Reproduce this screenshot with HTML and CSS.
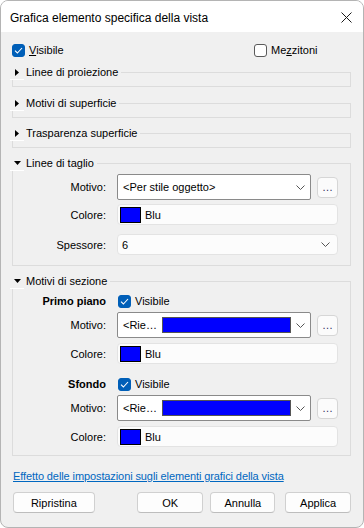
FILE: index.html
```html
<!DOCTYPE html>
<html>
<head>
<meta charset="utf-8">
<link rel="stylesheet" href="styles.css">
</head>
<body>
<div class="win">
  <div class="titlebar">
    <span class="title">Grafica elemento specifica della vista</span>
    <svg class="close" width="11" height="11" viewBox="0 0 11 11"><path d="M0.5 0.5 L10.5 10.5 M10.5 0.5 L0.5 10.5" stroke="#1a1a1a" stroke-width="1" fill="none"/></svg>
  </div>
  <div class="body">
    <div class="toprow">
      <div class="chk first"><span class="box on"><svg width="9" height="7" viewBox="0 0 9 7"><path d="M1 3.6 L3.4 6 L8 1" stroke="#fff" stroke-width="1.1" fill="none"/></svg></span><span><u>V</u>isibile</span></div>
      <div class="chk"><span class="box"></span><span>Me<u>z</u>zitoni</span></div>
    </div>

    <div class="group collapsed g1">
      <div class="ghead"><span class="tog"><svg width="4" height="7" viewBox="0 0 4 7"><path d="M0 0 L4 3.5 L0 7 Z" fill="#000"/></svg></span><span>Linee di proiezione</span></div>
    </div>
    <div class="group collapsed g2">
      <div class="ghead"><span class="tog"><svg width="4" height="7" viewBox="0 0 4 7"><path d="M0 0 L4 3.5 L0 7 Z" fill="#000"/></svg></span><span>Motivi di superficie</span></div>
    </div>
    <div class="group collapsed">
      <div class="ghead"><span class="tog"><svg width="4" height="7" viewBox="0 0 4 7"><path d="M0 0 L4 3.5 L0 7 Z" fill="#000"/></svg></span><span>Trasparenza superficie</span></div>
    </div>

    <div class="group taglio">
      <div class="ghead"><span class="tog"><svg width="7" height="4" viewBox="0 0 7 4"><path d="M0 0 L7 0 L3.5 4 Z" fill="#000"/></svg></span><span>Linee di taglio</span></div>
      <div class="row r-motivo">
        <span class="lbl">Motivo:</span>
        <div class="combo focus"><span class="ctext">&lt;Per stile oggetto&gt;</span><svg class="chev" width="9" height="5" viewBox="0 0 9 5"><path d="M0.5 0.5 L4.5 4.5 L8.5 0.5" stroke="#555" fill="none"/></svg></div>
        <div class="dots">…</div>
      </div>
      <div class="row r-colore">
        <span class="lbl">Colore:</span>
        <div class="field"><span class="swatch"></span><span>Blu</span></div>
      </div>
      <div class="row r-spess">
        <span class="lbl">Spessore:</span>
        <div class="field combo2"><span class="ctext">6</span><svg class="chev" width="9" height="5" viewBox="0 0 9 5"><path d="M0.5 0.5 L4.5 4.5 L8.5 0.5" stroke="#555" fill="none"/></svg></div>
      </div>
    </div>

    <div class="group sezione">
      <div class="ghead"><span class="tog"><svg width="7" height="4" viewBox="0 0 7 4"><path d="M0 0 L7 0 L3.5 4 Z" fill="#000"/></svg></span><span>Motivi di sezione</span></div>
      <div class="row r-sub">
        <span class="lbl bold">Primo piano</span>
        <div class="chk"><span class="box on"><svg width="9" height="7" viewBox="0 0 9 7"><path d="M1 3.6 L3.4 6 L8 1" stroke="#fff" stroke-width="1.1" fill="none"/></svg></span><span>Visibile</span></div>
      </div>
      <div class="row r-motivo2">
        <span class="lbl">Motivo:</span>
        <div class="combo"><span class="ctext">&lt;Rie…</span><span class="bar"></span><svg class="chev" width="9" height="5" viewBox="0 0 9 5"><path d="M0.5 0.5 L4.5 4.5 L8.5 0.5" stroke="#555" fill="none"/></svg></div>
        <div class="dots">…</div>
      </div>
      <div class="row r-colore">
        <span class="lbl">Colore:</span>
        <div class="field"><span class="swatch"></span><span>Blu</span></div>
      </div>
      <div class="row r-sub r-sfondo">
        <span class="lbl bold">Sfondo</span>
        <div class="chk"><span class="box on"><svg width="9" height="7" viewBox="0 0 9 7"><path d="M1 3.6 L3.4 6 L8 1" stroke="#fff" stroke-width="1.1" fill="none"/></svg></span><span>Visibile</span></div>
      </div>
      <div class="row r-motivo2">
        <span class="lbl">Motivo:</span>
        <div class="combo"><span class="ctext">&lt;Rie…</span><span class="bar"></span><svg class="chev" width="9" height="5" viewBox="0 0 9 5"><path d="M0.5 0.5 L4.5 4.5 L8.5 0.5" stroke="#555" fill="none"/></svg></div>
        <div class="dots">…</div>
      </div>
      <div class="row r-colore">
        <span class="lbl">Colore:</span>
        <div class="field"><span class="swatch"></span><span>Blu</span></div>
      </div>
    </div>

    <a class="link">Effetto delle impostazioni sugli elementi grafici della vista</a>

    <div class="buttons">
      <div class="btn b-rip">Ripristina</div>
      <div class="btn b-ok">OK</div>
      <div class="btn b-ann">Annulla</div>
      <div class="btn b-app">Applica</div>
    </div>
  </div>
</div>
</body>
</html>
```
FILE: styles.css
```css
html, body {
  margin: 0;
  padding: 0;
  background: #ffffff;
}
body {
  font-family: "Liberation Sans", Arial, sans-serif;
  font-size: 11px;
  color: #000;
}
.win {
  width: 364px;
  height: 528px;
  box-sizing: border-box;
  border: 1px solid #b4b4b4;
  border-radius: 8px;
  background: #f0f0f0;
  overflow: hidden;
  display: flex;
  flex-direction: column;
}
.titlebar {
  height: 31px;
  flex: none;
  background: #fff;
  display: flex;
  align-items: center;
  padding: 0 11px 0 9px;
}
.title {
  flex: 1;
  font-size: 12px;
  line-height: 16px;
  margin-top: 2px;
}
.close {
  display: block;
  margin-top: 2px;
}
.body {
  display: flex;
  flex-direction: column;
  padding: 0 12px 0 11px;
}
.toprow {
  display: flex;
  height: 16px;
  margin-top: 10px;
}
.chk {
  display: flex;
  align-items: center;
  gap: 4px;
  line-height: 16px;
}
.chk.first {
  width: 242px;
  flex: none;
}
.box {
  width: 11px;
  height: 11px;
  border: 1px solid #5a5a5a;
  border-radius: 3px;
  background: #fff;
  display: flex;
  align-items: center;
  justify-content: center;
}
.box.on {
  background: #005fb8;
  border-color: #005fb8;
}
.group {
  border: 1px solid #dcdcdc;
  margin-top: 15px;
  display: flex;
  flex-direction: column;
}
.group.g1 { margin-top: 14px; }
.group.g2 { margin-top: 16px; }
.group.collapsed {
  height: 15px;
  box-sizing: border-box;
}
.ghead {
  align-self: flex-start;
  display: flex;
  align-items: center;
  height: 16px;
  margin: -9px 0 0 -3px;
  padding-right: 3px;
  background: #f0f0f0;
  line-height: 16px;
}
.tog {
  width: 14px;
  height: 14px;
  box-sizing: border-box;
  border-bottom: 1px solid #fff;
  display: flex;
  align-items: center;
  justify-content: center;
  margin-right: 2px;
  margin-top: 1px;
}
.row {
  display: flex;
  align-items: center;
  padding-right: 12px;
}
.lbl {
  width: 93px;
  text-align: right;
  margin-right: 11px;
  flex: none;
}
.bold {
  font-weight: bold;
}
.taglio .r-motivo { margin-top: 3px; }
.taglio .r-colore { margin-top: 4px; }
.taglio .r-spess { margin-top: 9px; }
.taglio { padding-bottom: 10px; }
.sezione { padding-bottom: 8px; }
.sezione .r-sub { margin-top: 4px; height: 16px; }
.sezione .r-sfondo { margin-top: 12px; }
.sezione .r-motivo2 { margin-top: 3px; }
.sezione .r-colore { margin-top: 5px; }
.r-sub .chk { margin-left: 1px; }

.combo {
  width: 194px;
  height: 26px;
  box-sizing: border-box;
  border: 1px solid #8a8a8a;
  background: #fff;
  display: flex;
  align-items: center;
  padding: 0 5px 0 5px;
  border-radius: 2px;
}
.ctext {
  flex: none;
  line-height: 16px;
}
.combo .chev, .combo2 .chev {
  margin-left: auto;
}
.bar {
  width: 127px;
  height: 14px;
  background: #0000ff;
  border: 1px solid #555;
  margin-left: 5px;
}
.dots {
  width: 21px;
  height: 21px;
  box-sizing: border-box;
  margin-left: 6px;
  border: 1px solid #d6d6d6;
  border-radius: 4px;
  background: #fbfbfb;
  display: flex;
  align-items: center;
  justify-content: center;
  line-height: 14px;
  color: #303060;
  font-size: 11px;
}
.field {
  flex: 1;
  height: 21px;
  box-sizing: border-box;
  border: 1px solid #e3e3e3;
  border-radius: 4px;
  background: #fcfcfc;
  display: flex;
  align-items: center;
  padding: 0 7px 0 2px;
  line-height: 16px;
}
.combo2 {
  padding-left: 4px;
}
.swatch {
  width: 21px;
  height: 16px;
  box-sizing: border-box;
  background: #0000ff;
  border: 1px solid #000;
  margin-right: 4px;
}
.link {
  margin-top: 12px;
  margin-left: 1px;
  color: #0067c0;
  text-decoration: underline;
  line-height: 16px;
  letter-spacing: -0.1px;
  align-self: flex-start;
}
.buttons {
  display: flex;
  margin-top: 8px;
}
.btn {
  height: 21px;
  box-sizing: border-box;
  border: 1px solid #d0d0d0;
  border-bottom-color: #bdbdbd;
  border-radius: 4px;
  background: #fdfdfd;
  display: flex;
  align-items: center;
  justify-content: center;
  line-height: 16px;
}
.b-rip { width: 82px; margin-left: 1px; }
.b-ok { width: 67px; margin-left: 42px; }
.b-ann { width: 65px; margin-left: 7px; }
.b-app { width: 66px; margin-left: 10px; }
```
